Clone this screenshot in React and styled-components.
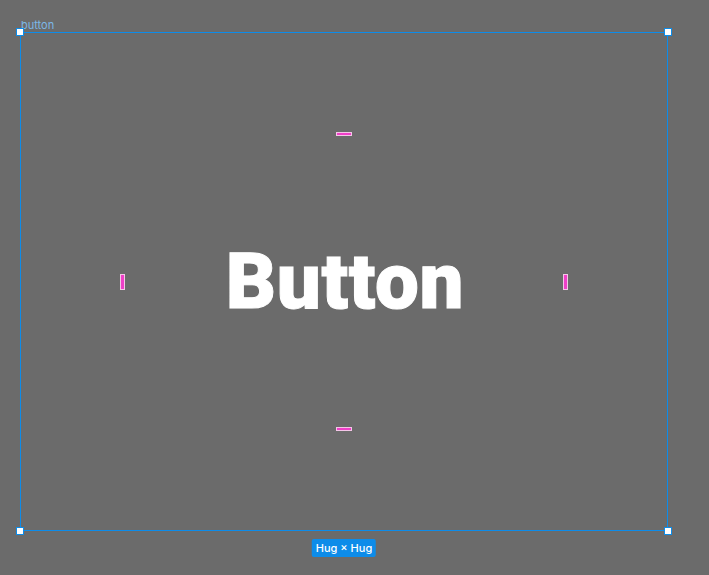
import React from "react";
import styled, { createGlobalStyle } from "styled-components";

const Global = createGlobalStyle`
  html, body { margin: 0; padding: 0; background: #6b6b6b; }
  body { font-family: Inter, "Liberation Sans", sans-serif; }
`;

const Canvas = styled.div`
  width: 709px;
  height: 575px;
  background: #6b6b6b;
  padding: 18px 0 0 20px;
  box-sizing: border-box;
  overflow: hidden;
`;

const FrameLabel = styled.div`
  font-family: Inter, "Liberation Sans", sans-serif;
  font-size: 11px;
  line-height: 14px;
  color: #7cb8e6;
  padding-left: 1px;
`;

const Frame = styled.div`
  position: relative;
  width: 648px;
  height: 499px;
  box-sizing: border-box;
  border: 1px solid #0d8ce9;
  display: grid;
  grid-template-columns: 1fr auto 1fr;
  grid-template-rows: 1fr auto 1fr;
  place-items: center;
`;

const Label = styled.span`
  grid-column: 2;
  grid-row: 2;
  font-family: Roboto, "Liberation Sans", sans-serif;
  font-weight: 900;
  font-size: 78px;
  line-height: 94px;
  color: #ffffff;
  letter-spacing: 0.6px;
  -webkit-text-stroke: 1px #ffffff;
  padding-left: 2px;
`;

const Handle = styled.div`
  position: absolute;
  width: 6px;
  height: 6px;
  background: #ffffff;
  border: 1px solid #0d8ce9;
  ${(p) => (p.$top ? "top: -5px;" : "bottom: -5px;")}
  ${(p) => (p.$left ? "left: -5px;" : "right: -5px;")}
`;

const Marker = styled.div`
  grid-column: ${(p) => p.$col};
  grid-row: ${(p) => p.$row};
  box-sizing: border-box;
  background: #f03fc8;
  border: 1px solid #f4c6e8;
  width: ${(p) => (p.$vertical ? "5px" : "16px")};
  height: ${(p) => (p.$vertical ? "16px" : "4px")};
`;

const SizeBadge = styled.div`
  position: absolute;
  left: 50%;
  bottom: -27px;
  transform: translateX(-50%);
  background: #0d8ce9;
  color: #ffffff;
  font-family: Inter, "Liberation Sans", sans-serif;
  font-size: 11px;
  font-weight: 500;
  line-height: 18px;
  padding: 0 4px;
  border-radius: 2px;
  white-space: nowrap;
`;

export default function App() {
  return (
    <Canvas>
      <Global />
      <FrameLabel>button</FrameLabel>
      <Frame>
        <Marker $col={2} $row={1} />
        <Marker $vertical $col={1} $row={2} />
        <Label>Button</Label>
        <Marker $vertical $col={3} $row={2} />
        <Marker $col={2} $row={3} />
        <Handle $top $left />
        <Handle $top />
        <Handle $left />
        <Handle />
        <SizeBadge>Hug × Hug</SizeBadge>
      </Frame>
    </Canvas>
  );
}
